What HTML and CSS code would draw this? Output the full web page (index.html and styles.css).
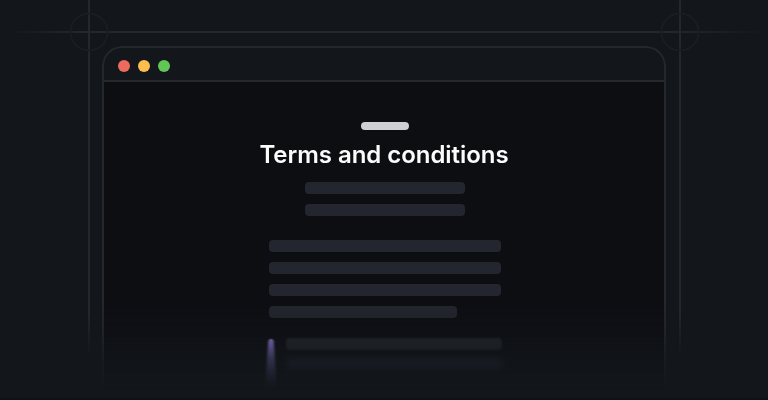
FILE: index.html
```html
<!DOCTYPE html>
<html lang="en">
<head>
<meta charset="utf-8">
<title>Terms and conditions</title>
<link rel="stylesheet" href="styles.css">
</head>
<body>
<main class="scene">
  <svg class="guides" width="768" height="400" viewBox="0 0 768 400" fill="none" aria-hidden="true">
    <defs>
      <linearGradient id="across" gradientUnits="userSpaceOnUse" x1="0" y1="0" x2="768" y2="0">
        <stop offset=".01" stop-color="#25282b" stop-opacity="0"/>
        <stop offset=".11" stop-color="#25282b"/>
        <stop offset=".87" stop-color="#25282b"/>
        <stop offset="1" stop-color="#25282b" stop-opacity="0"/>
      </linearGradient>
      <linearGradient id="down" gradientUnits="userSpaceOnUse" x1="0" y1="0" x2="0" y2="400">
        <stop offset=".78" stop-color="#25282b"/>
        <stop offset=".89" stop-color="#25282b" stop-opacity="0"/>
      </linearGradient>
    </defs>
    <rect x="0" y="31" width="768" height="2" fill="url(#across)"/>
    <rect x="88" y="0" width="2" height="400" fill="url(#down)"/>
    <rect x="679" y="0" width="2" height="400" fill="url(#down)"/>
    <circle cx="89" cy="32" r="18.5" stroke="#1a1e21" stroke-width="1.8"/>
    <circle cx="680" cy="32" r="18.5" stroke="#1a1e21" stroke-width="1.8"/>
  </svg>
  <section class="window">
    <header class="titlebar">
      <span class="dot red"></span>
      <span class="dot yellow"></span>
      <span class="dot green"></span>
    </header>
    <div class="document">
      <span class="badge"></span>
      <h1>Terms and conditions</h1>
      <div class="intro">
        <span class="bar"></span>
        <span class="bar"></span>
      </div>
      <div class="paragraph">
        <span class="bar"></span>
        <span class="bar"></span>
        <span class="bar"></span>
        <span class="bar short"></span>
      </div>
      <div class="quote">
        <svg class="marker" width="16" height="60" viewBox="0 0 16 60" aria-hidden="true">
          <defs>
            <linearGradient id="glow" x1="0" y1="0" x2="0" y2="1">
              <stop offset="0" stop-color="#a48cf5"/>
              <stop offset=".3" stop-color="#8a76d0"/>
              <stop offset=".6" stop-color="#6c60a0" stop-opacity=".9"/>
              <stop offset="1" stop-color="#5b5588" stop-opacity=".3"/>
            </linearGradient>
            <filter id="soft" x="-1" width="3"><feGaussianBlur stdDeviation="1 .6"/></filter>
          </defs>
          <path d="M5.3 3Q8-2 10.7 3Q12 22 14 56H2Q4 22 5.3 3Z" fill="url(#glow)" filter="url(#soft)"/>
        </svg>
        <div class="quote-lines">
          <span class="bar faint"></span>
          <span class="bar fainter"></span>
        </div>
      </div>
    </div>
  </section>
</main>
</body>
</html>
```
FILE: styles.css
```css
* {
  box-sizing: border-box;
}

body {
  margin: 0;
  background: #13171b;
  font-family: Inter, "Liberation Sans", sans-serif;
}

.scene {
  position: relative;
  height: 400px;
  padding: 46px 102px 0;
  overflow: hidden;
  border-bottom: 2px solid #101115;
}

.guides {
  position: absolute;
  inset: 0;
}

.window {
  position: relative;
  width: 564px;
  height: 352px;
  border: 2px solid #25282b;
  border-bottom: 0;
  border-radius: 20px 20px 0 0;
  background: #13171b;
  overflow: hidden;
  -webkit-mask-image: linear-gradient(#000 252px, rgb(0 0 0 / .75) 285px, rgb(0 0 0 / .3) 312px, transparent 344px);
  mask-image: linear-gradient(#000 252px, rgb(0 0 0 / .75) 285px, rgb(0 0 0 / .3) 312px, transparent 344px);
}

.titlebar {
  display: flex;
  align-items: center;
  gap: 8px;
  height: 34px;
  padding: 4px 14px 0;
  border-bottom: 2px solid #25282b;
}

.dot {
  width: 12px;
  height: 12px;
  border-radius: 50%;
}

.red {
  background: #ed6a5f;
}

.yellow {
  background: #fcbd4f;
}

.green {
  background: #62c656;
}

.document {
  display: flex;
  flex-direction: column;
  align-items: center;
  height: 316px;
  padding-top: 40px;
  background: #0d0e12;
}

.badge {
  width: 48px;
  height: 8px;
  margin-left: 1px;
  border-radius: 4px;
  background: #cfd0d3;
}

h1 {
  margin: 10px 0 12px;
  color: #fbfcfc;
  font-size: 24px;
  font-weight: 600;
  letter-spacing: -.04px;
  line-height: 30px;
  white-space: nowrap;
}

.intro,
.paragraph,
.quote-lines {
  display: grid;
  gap: 10px;
}

.intro {
  width: 160px;
  margin-left: 1px;
}

.paragraph {
  width: 232px;
  margin: 24px 0 20px 2px;
}

.bar {
  height: 12px;
  border-radius: 4px;
  background: #24262f;
}

.short {
  width: 188px;
}

.quote {
  display: flex;
  width: 240px;
  margin-right: 2px;
}

.marker {
  flex: none;
}

.quote-lines {
  width: 216px;
  margin-left: 7px;
  align-content: start;
  gap: 8px;
}

.faint {
  background: #25292f;
  filter: blur(1px);
}

.fainter {
  background: #252936;
  filter: blur(3px);
}
```
